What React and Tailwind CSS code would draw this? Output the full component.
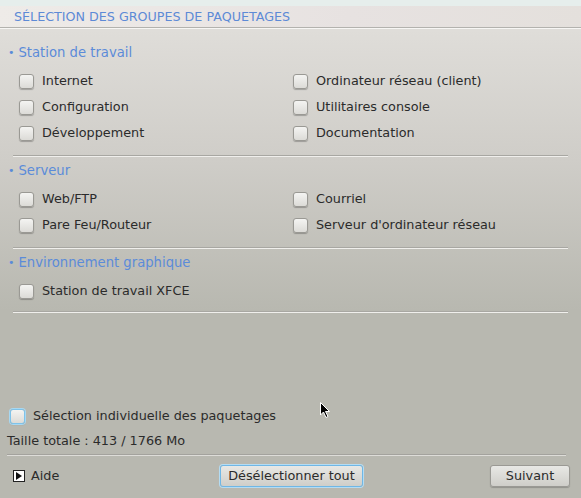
import React from 'react';

const Check = ({ focus }) => (
  <span
    className={
      'inline-block w-[15px] h-[15px] rounded-[3px] shrink-0 bg-[linear-gradient(to_bottom,#f4f4f2,#dcdbd7)] shadow-[0_1px_1px_rgba(0,0,0,0.25)] ' +
      (focus ? 'border border-[#7ec3ea] ring-1 ring-[#a8d8f2]' : 'border border-[#9a9994]')
    }
  />
);

const Item = ({ label }) => (
  <div className="flex items-center gap-[8px] h-[26px]">
    <Check />
    <span>{label}</span>
  </div>
);

const Separator = () => (
  <div className="mx-[13px] h-[2px] bg-[linear-gradient(to_bottom,#a8a7a2_50%,#f0efec_50%)]" />
);

const Section = ({ title, left, right, pb }) => (
  <div>
    <div className="flex items-center h-[24px] pl-[8px] text-[13.2px] text-[#5b8bd9]">
      <span className="text-[11px] mr-[4px]">•</span>
      {title}
    </div>
    <div className={'grid grid-cols-[274px_1fr] pl-[19px] pt-[3px] ' + pb}>
      <div>
        {left.map((l) => (
          <Item key={l} label={l} />
        ))}
      </div>
      <div>
        {right.map((l) => (
          <Item key={l} label={l} />
        ))}
      </div>
    </div>
  </div>
);

export default function App() {
  return (
    <div
      className="relative w-[581px] h-[498px] overflow-hidden text-[12.8px] text-[#2b2b2b] bg-[linear-gradient(to_bottom,#dfddd9_30px,#cfcdc8_160px,#b8b8b0_310px)]"
      style={{ fontFamily: '"DejaVu Sans", sans-serif' }}
    >
      {/* header */}
      <div className="h-[6px] bg-[#e6eeec]" />
      <div className="h-[21px] flex items-center pl-[14px] text-[12.7px] text-[#5d8ad6] bg-[linear-gradient(100deg,#eeebe8,#e7e2e1_60%,#e4e0dc)]">
        SÉLECTION DES GROUPES DE PAQUETAGES
      </div>
      <div className="h-[2px] bg-[linear-gradient(to_bottom,#b3b2ae_50%,#f7f6f4_50%)]" />

      <div className="pt-[12px]">
        <Section
          title="Station de travail"
          left={['Internet', 'Configuration', 'Développement']}
          right={['Ordinateur réseau (client)', 'Utilitaires console', 'Documentation']}
          pb="pb-[9px]"
        />
        <Separator />
        <div className="pt-[2px]">
          <Section
            title="Serveur"
            left={['Web/FTP', 'Pare Feu/Routeur']}
            right={['Courriel', "Serveur d'ordinateur réseau"]}
            pb="pb-[9px]"
          />
        </div>
        <Separator />
        <div className="pt-[2px]">
          <Section title="Environnement graphique" left={['Station de travail XFCE']} right={[]} pb="pb-[7px]" />
        </div>
        <Separator />
      </div>

      {/* bottom */}
      <div className="absolute left-0 right-0 top-[404px]">
        <div className="flex items-center gap-[8px] pl-[10px] h-[24px]">
          <Check focus />
          <span>Sélection individuelle des paquetages</span>
        </div>
        <div className="pl-[7px] h-[26px] flex items-center">Taille totale : 413 / 1766 Mo</div>
        <div className="ml-[7px] mr-[15px] h-[2px] bg-[linear-gradient(to_bottom,#a3a29d_50%,#dddcd8_50%)]" />
        <div className="flex items-center justify-between h-[38px] pt-[2px] pl-[13px] pr-[11px]">
          <div className="flex items-center gap-[6px] w-[200px]">
            <span className="w-[12px] h-[12px] border border-[#222] bg-white flex items-center justify-center">
              <svg width="6" height="8" viewBox="0 0 6 8">
                <path d="M0 0 L6 4 L0 8 Z" fill="#111" />
              </svg>
            </span>
            <span>Aide</span>
          </div>
          <button className="h-[22px] px-[7px] rounded-[3px] border border-[#6fb7e6] bg-[linear-gradient(to_bottom,#e8e8e5,#cfcec9)] shadow-[0_0_0_1px_#b4dcf3] text-[#2b2b2b]">
            Désélectionner tout
          </button>
          <div className="w-[200px] flex justify-end">
            <button className="h-[22px] w-[80px] rounded-[3px] border border-[#9a9994] bg-[linear-gradient(to_bottom,#e8e8e5,#cfcec9)] shadow-[0_1px_1px_rgba(0,0,0,0.2)] text-[#2b2b2b]">
              Suivant
            </button>
          </div>
        </div>
      </div>

      {/* mouse pointer */}
      <svg className="absolute left-[320px] top-[402px]" width="12" height="17" viewBox="0 0 12 17">
        <path d="M0.5 0.5 L0.5 13 L3.5 10 L6 15.5 L8 14.5 L5.5 9.5 L9.5 9.5 Z" fill="#000" stroke="#fff" strokeWidth="1" />
      </svg>
    </div>
  );
}
